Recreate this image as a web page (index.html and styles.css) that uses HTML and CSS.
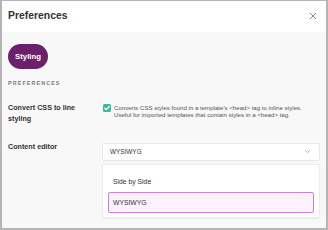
FILE: index.html
```html
<!DOCTYPE html>
<html>
<head>
<meta charset="utf-8">
<link rel="stylesheet" href="styles.css">
</head>
<body>
<div class="frame">
  <div class="header">
    <div class="title">Preferences</div>
    <svg class="close" width="8" height="8" viewBox="0 0 8 8"><path d="M1 1L7 7M7 1L1 7" stroke="#8a8a8a" stroke-width="1" fill="none"/></svg>
  </div>
  <div class="body">
    <div class="tabs"><div class="pill">Styling</div></div>
    <div class="section">PREFERENCES</div>
    <div class="row row-first">
      <div class="label">Convert CSS to line styling</div>
      <div class="field check-field">
        <span class="checkbox"><svg width="8" height="8" viewBox="0 0 8 8"><path d="M1.8 4.2L3.3 5.6L6.2 2.5" stroke="#fff" stroke-width="1.2" fill="none" stroke-linecap="round" stroke-linejoin="round"/></svg></span>
        <div class="desc">Converts CSS styles found in a template's &lt;head&gt; tag to inline styles. Useful for imported templates that contain styles in a &lt;head&gt; tag.</div>
      </div>
    </div>
    <div class="row row-second">
      <div class="label">Content editor</div>
      <div class="field select-field">
        <div class="select">
          <span>WYSIWYG</span>
          <svg width="7" height="5" viewBox="0 0 7 5"><path d="M1 1.2L3.5 3.6L6 1.2" stroke="#a0a0a0" stroke-width="0.8" fill="none"/></svg>
        </div>
        <div class="menu">
          <div class="option">Side by Side</div>
          <div class="option selected">WYSIWYG</div>
        </div>
      </div>
    </div>
  </div>
</div>
</body>
</html>
```

FILE: styles.css
```css
html, body {
  margin: 0;
  padding: 0;
}
body {
  width: 328px;
  height: 230px;
  overflow: hidden;
  font-family: "Liberation Sans", Arial, sans-serif;
  color: #333;
}
.frame {
  width: 328px;
  height: 230px;
  box-sizing: border-box;
  border: 2px solid #b5b5b5;
  border-top-width: 1px;
  display: flex;
  flex-direction: column;
  background: #f8f8f8;
}
.header {
  height: 31px;
  flex: none;
  background: #fff;
  display: flex;
  align-items: center;
  justify-content: space-between;
  padding: 0 9px 2px 6px;
  box-sizing: border-box;
}
.title {
  font-size: 10.4px;
  font-weight: bold;
  color: #333;
}
.close {
  display: block;
}
.body {
  flex: 1;
  padding: 12px 6px 0 6px;
  box-sizing: border-box;
}
.tabs {
  display: flex;
}
.pill {
  width: 40px;
  height: 25px;
  border-radius: 13px;
  background: #6c1f6a;
  color: #fff;
  font-size: 7.8px;
  font-weight: bold;
  display: flex;
  align-items: center;
  justify-content: center;
}
.section {
  margin-top: 11px;
  font-size: 5.4px;
  line-height: 7px;
  letter-spacing: 1.1px;
  font-weight: bold;
  color: #7a7a7a;
}
.row {
  display: flex;
  align-items: flex-start;
}
.row-first {
  margin-top: 15px;
}
.row-second {
  margin-top: 17px;
}
.label {
  width: 86px;
  flex: none;
  font-size: 7.2px;
  line-height: 11px;
  font-weight: bold;
  color: #333;
}
.field {
  margin-left: 8px;
  flex: 1;
}
.check-field {
  display: flex;
  align-items: flex-start;
  padding-top: 1.5px;
}
.checkbox {
  width: 8px;
  height: 8px;
  flex: none;
  margin-left: 1px;
  border-radius: 1.5px;
  background: #3fb99b;
  display: flex;
}
.desc {
  margin-left: 3px;
  margin-top: 0.3px;
  max-width: 196px;
  font-size: 6.1px;
  line-height: 7.4px;
  color: #555;
}
.select-field {
  padding-top: 1.5px;
}
.select {
  height: 18px;
  box-sizing: border-box;
  background: #fff;
  border: 1px solid #e8e8e8;
  border-radius: 2px;
  display: flex;
  align-items: center;
  justify-content: space-between;
  padding: 0 8px 0 7px;
  font-size: 6.4px;
  color: #333;
}
.select svg {
  display: block;
}
.menu {
  margin-top: 3px;
  height: 54px;
  box-sizing: border-box;
  background: #fff;
  border: 1px solid #ececec;
  border-radius: 2px;
  box-shadow: 0 1px 2px rgba(0, 0, 0, 0.05);
  padding: 6px 5px 0 5px;
}
.option {
  height: 21px;
  box-sizing: border-box;
  border: 1px solid transparent;
  border-radius: 2px;
  display: flex;
  align-items: center;
  padding-left: 4px;
  font-size: 6.8px;
  color: #333;
}
.option.selected {
  background: #fdf1fd;
  border-color: #c983d2;
}
```
